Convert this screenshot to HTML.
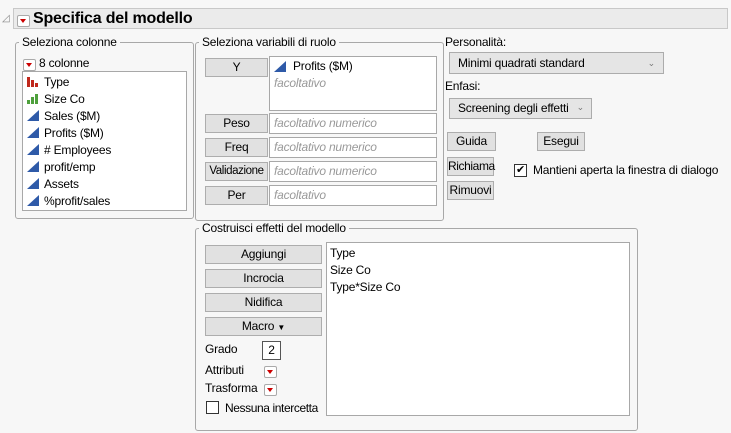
<!DOCTYPE html><html><head><style>
body{margin:0;width:731px;height:433px;background:#f7f7f7;font-family:"Liberation Sans",sans-serif;font-size:12px;letter-spacing:-0.2px;color:#000;position:relative;overflow:hidden}
.a{position:absolute;white-space:nowrap}
.grp{position:absolute;border:1px solid #a8a8a8;border-radius:3px}
.lbl{position:absolute;background:#f7f7f7;padding:0 3px;top:-8px;left:3px;line-height:14px}
.btn{position:absolute;background:#e1e1e1;border:1px solid #adadad;text-align:center;box-sizing:border-box;line-height:17px}
.box{position:absolute;background:#fff;border:1px solid #a8a8a8;box-sizing:border-box}
.ph{color:#999;font-style:italic}
.rt{display:inline-block;width:11px;height:10px;border:1px solid #aaa;background:#fff;position:relative;vertical-align:middle;border-radius:2px}
.rt:after{content:"";position:absolute;left:2px;top:3px;border-left:3.5px solid transparent;border-right:3.5px solid transparent;border-top:4px solid #c00}
.dd{position:absolute;background:#e5e5e5;border:1px solid #acacac;box-sizing:border-box;padding-left:8px;line-height:19px}
.ic{position:absolute;left:4px}
</style></head><body>
<div class="a" style="left:2px;top:13px;font-size:10px;color:#888">◿</div>
<div class="a" style="left:13px;top:8px;width:715px;height:21px;background:#ebebeb;border:1px solid #c8c8c8;box-sizing:border-box"></div>
<div class="a" style="left:17px;top:13px"><span class="rt"></span></div>
<div class="a" style="left:33px;top:9px;font-size:16px;font-weight:bold;line-height:20px">Specifica del modello</div>

<div class="grp" style="left:15px;top:42px;width:177px;height:175px"><div class="lbl">Seleziona colonne</div></div>
<div class="a" style="left:23px;top:57px"><span class="rt"></span></div>
<div class="a" style="left:39px;top:56px;line-height:14px">8 colonne</div>
<div class="box" style="left:22px;top:71px;width:165px;height:140px">
<svg class="ic" style="top:4px" width="12" height="11"><rect x="0" y="1" width="3" height="10" fill="#c0281c"/><rect x="4" y="4" width="3" height="7" fill="#c0281c"/><rect x="8" y="7" width="3" height="4" fill="#c0281c"/></svg>
<svg class="ic" style="top:21px" width="12" height="11"><rect x="0" y="7" width="3" height="4" fill="#4ea03c"/><rect x="4" y="4" width="3" height="7" fill="#4ea03c"/><rect x="8" y="1" width="3" height="10" fill="#4ea03c"/></svg>
<svg class="ic" style="top:38px" width="12" height="11"><path d="M0 11L12 0V11Z" fill="#2e5aa8"/></svg>
<svg class="ic" style="top:55px" width="12" height="11"><path d="M0 11L12 0V11Z" fill="#2e5aa8"/></svg>
<svg class="ic" style="top:72px" width="12" height="11"><path d="M0 11L12 0V11Z" fill="#2e5aa8"/></svg>
<svg class="ic" style="top:89px" width="12" height="11"><path d="M0 11L12 0V11Z" fill="#2e5aa8"/></svg>
<svg class="ic" style="top:106px" width="12" height="11"><path d="M0 11L12 0V11Z" fill="#2e5aa8"/></svg>
<svg class="ic" style="top:123px" width="12" height="11"><path d="M0 11L12 0V11Z" fill="#2e5aa8"/></svg>
<div class="a" style="left:21px;top:2px;line-height:17px">Type<br>Size Co<br>Sales ($M)<br>Profits ($M)<br># Employees<br>profit/emp<br>Assets<br>%profit/sales</div>
</div>

<div class="grp" style="left:195px;top:42px;width:247px;height:177px"><div class="lbl">Seleziona variabili di ruolo</div></div>
<div class="btn" style="left:205px;top:58px;width:63px;height:19px">Y</div>
<div class="box" style="left:269px;top:56px;width:168px;height:55px">
<svg class="a" style="left:4px;top:4px" width="12" height="11"><path d="M0 11L12 0V11Z" fill="#2e5aa8"/></svg>
<div class="a" style="left:23px;top:2px;line-height:15px">Profits ($M)</div>
<div class="a ph" style="left:4px;top:19px;line-height:15px">facoltativo</div></div>
<div class="btn" style="left:205px;top:114px;width:63px;height:19px">Peso</div>
<div class="box ph" style="left:269px;top:113px;width:168px;height:21px;padding:2px 4px">facoltativo numerico</div>
<div class="btn" style="left:205px;top:138px;width:63px;height:19px">Freq</div>
<div class="box ph" style="left:269px;top:137px;width:168px;height:21px;padding:2px 4px">facoltativo numerico</div>
<div class="btn" style="left:205px;top:162px;width:63px;height:19px;font-size:11.5px;letter-spacing:-0.4px">Validazione</div>
<div class="box ph" style="left:269px;top:161px;width:168px;height:21px;padding:2px 4px">facoltativo numerico</div>
<div class="btn" style="left:205px;top:186px;width:63px;height:19px">Per</div>
<div class="box ph" style="left:269px;top:185px;width:168px;height:21px;padding:2px 4px">facoltativo</div>

<div class="a" style="left:445px;top:35px">Personalità:</div>
<div class="dd" style="left:449px;top:52px;width:215px;height:22px;line-height:20px">Minimi quadrati standard<span class="a" style="right:8px;top:0;font-size:9px;color:#777">⌄</span></div>
<div class="a" style="left:445px;top:79px">Enfasi:</div>
<div class="dd" style="left:449px;top:98px;width:143px;height:21px">Screening degli effetti<span class="a" style="right:7px;top:-1px;font-size:9px;color:#777">⌄</span></div>
<div class="btn" style="left:447px;top:132px;width:49px;height:19px">Guida</div>
<div class="btn" style="left:537px;top:132px;width:48px;height:19px">Esegui</div>
<div class="btn" style="left:447px;top:157px;width:47px;height:19px;letter-spacing:-0.4px">Richiama</div>
<div class="btn" style="left:447px;top:181px;width:47px;height:19px">Rimuovi</div>
<div class="a" style="left:514px;top:164px;width:11px;height:11px;border:1px solid #333;background:#fff;font-size:11px;line-height:11px;text-align:center">✔</div>
<div class="a" style="left:533px;top:163px">Mantieni aperta la finestra di dialogo</div>

<div class="grp" style="left:195px;top:228px;width:441px;height:201px"><div class="lbl">Costruisci effetti del modello</div></div>
<div class="btn" style="left:205px;top:245px;width:117px;height:19px">Aggiungi</div>
<div class="btn" style="left:205px;top:269px;width:117px;height:19px">Incrocia</div>
<div class="btn" style="left:205px;top:293px;width:117px;height:19px">Nidifica</div>
<div class="btn" style="left:205px;top:317px;width:117px;height:19px">Macro <span style="font-size:8px">▼</span></div>
<div class="a" style="left:205px;top:342px">Grado</div>
<div class="a" style="left:262px;top:341px;width:17px;height:17px;border:1px solid #555;background:#fff;text-align:center;line-height:16px">2</div>
<div class="a" style="left:205px;top:363px">Attributi</div>
<div class="a" style="left:264px;top:364px"><span class="rt"></span></div>
<div class="a" style="left:205px;top:381px">Trasforma</div>
<div class="a" style="left:264px;top:382px"><span class="rt"></span></div>
<div class="a" style="left:206px;top:401px;width:11px;height:11px;border:1px solid #333;background:#fff"></div>
<div class="a" style="left:225px;top:401px;letter-spacing:-0.4px">Nessuna intercetta</div>
<div class="box" style="left:326px;top:242px;width:304px;height:174px">
<div class="a" style="left:3px;top:2px;line-height:17px">Type<br>Size Co<br>Type*Size Co</div></div>
</body></html>
